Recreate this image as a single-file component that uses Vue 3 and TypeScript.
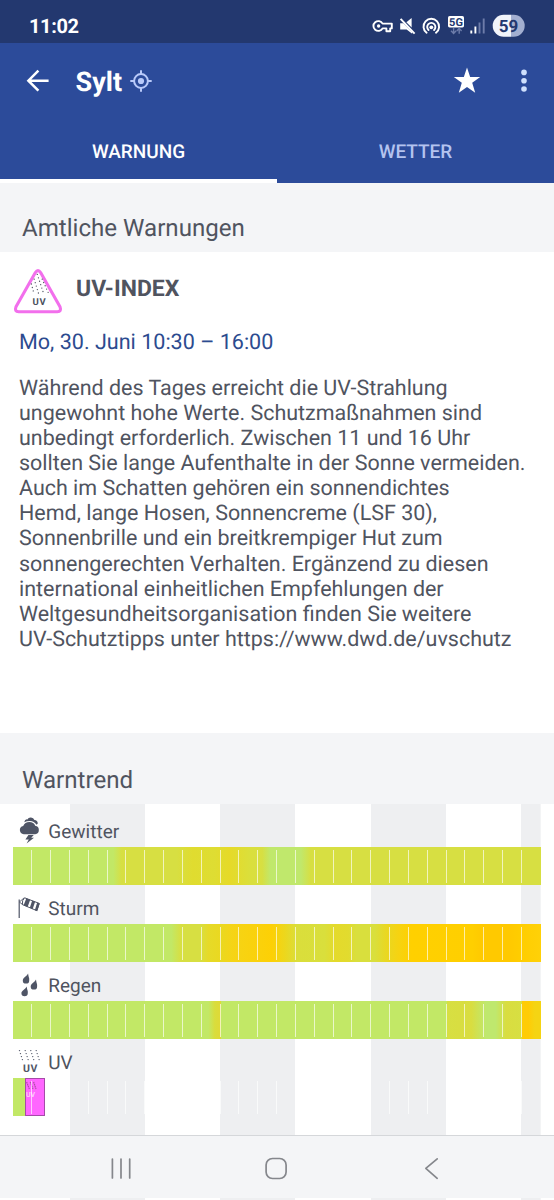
<script setup lang="ts">
interface TrendRow {
  id: string
  label: string
}

const hourCount = 28
const ticks: number[] = Array.from({ length: hourCount - 1 }, (_, i) => i + 1)

const rows: TrendRow[] = [
  { id: 'gewitter', label: 'Gewitter' },
  { id: 'sturm', label: 'Sturm' },
  { id: 'regen', label: 'Regen' },
  { id: 'uv', label: 'UV' },
]

const warningLines: string[] = [
  'Während des Tages erreicht die UV-Strahlung',
  'ungewohnt hohe Werte. Schutzmaßnahmen sind',
  'unbedingt erforderlich. Zwischen 11 und 16 Uhr',
  'sollten Sie lange Aufenthalte in der Sonne vermeiden.',
  'Auch im Schatten gehören ein sonnendichtes',
  'Hemd, lange Hosen, Sonnencreme (LSF 30),',
  'Sonnenbrille und ein breitkrempiger Hut zum',
  'sonnengerechten Verhalten. Ergänzend zu diesen',
  'international einheitlichen Empfehlungen der',
  'Weltgesundheitsorganisation finden Sie weitere',
  'UV-Schutztipps unter https://www.dwd.de/uvschutz',
]
</script>

<template>
  <div class="screen">
    <div class="status">
      <span class="clock">11:02</span>
      <svg class="status-icons" width="160" height="43" viewBox="370 0 160 43">
        <path d="M382.6 23.6H391.8V28.4H390.2V31.2H386.4V28.4H382.6A4.9 4.9 0 1 1 382.6 23.6Z" fill="none" stroke="#fff" stroke-width="1.9" stroke-linejoin="round" />
        <circle cx="378.6" cy="26" r="1.7" fill="#fff" />
        <path d="M400.2 23.2H403.4L412.2 32V33.8L406.6 29.4H400.2Z" fill="#fff" />
        <path d="M406.4 22.2L411.6 18V27.4Z" fill="#fff" />
        <path d="M400.6 18.8L414.6 33.6" stroke="#fff" stroke-width="1.9" />
        <g fill="none" stroke="#fff" stroke-width="1.9" stroke-linecap="round">
          <path d="M426.6 32.8A7.8 7.8 0 1 1 436 32.8" />
          <path d="M428.5 30A4.1 4.1 0 1 1 434.1 30" />
        </g>
        <circle cx="431.3" cy="27.3" r="1.9" fill="#fff" />
        <rect x="448" y="16" width="16" height="11.4" rx="1.6" fill="#fff" />
        <text x="456" y="25.6" text-anchor="middle" class="net">5G</text>
        <path d="M453.6 28V33M451 30.8L453.6 33.4L456.2 30.8M459.2 33.8V28.6M456.8 31L459.2 28.4L461.6 31" fill="none" stroke="#6d7ca9" stroke-width="1.4" />
        <path d="M471.3 30.4V33.6M475.4 26.4V33.6" stroke="#fff" stroke-width="1.9" />
        <path d="M479.5 22.4V33.6M483.7 18.6V33.6" stroke="#6d7ca9" stroke-width="1.9" />
        <path d="M511 14.7H503.7A11 11 0 0 0 503.7 36.7H511Z" fill="#f1f4fa" />
        <path d="M511 14.7H513.7A11 11 0 0 1 513.7 36.7H511Z" fill="#a3afd0" />
        <text x="508.6" y="31.6" text-anchor="middle" class="battery">59</text>
      </svg>
    </div>

    <header class="appbar">
      <div class="toolbar">
        <svg class="back" width="24" height="24" viewBox="0 0 24 24">
          <path d="M12.4 1.7L2.4 11.7L12.4 21.7M2.6 11.7H22.6" fill="none" stroke="#fff" stroke-width="2.5" />
        </svg>
        <h1>Sylt</h1>
        <svg class="locate" width="22" height="22" viewBox="0 0 22 22">
          <circle cx="11" cy="11" r="6.9" fill="none" stroke="#b9cafa" stroke-width="2" />
          <circle cx="11" cy="11" r="3.1" fill="#b9cafa" />
          <path d="M11 .3V4M11 18V21.7M.3 11H4M18 11H21.7" stroke="#b9cafa" stroke-width="2" />
        </svg>
        <svg class="star" width="28" height="28" viewBox="0 0 28 28">
          <path d="M14 .6L17.15 10H27.2L19.2 15.8L22.2 25.8L14 20L5.8 25.8L8.8 15.8L.8 10H10.85Z" fill="#fff" />
        </svg>
        <svg class="more" width="8" height="24" viewBox="0 0 8 24">
          <g fill="#cfe0fd">
            <circle cx="4" cy="3.4" r="2.8" />
            <circle cx="4" cy="11.7" r="2.8" />
            <circle cx="4" cy="20" r="2.8" />
          </g>
        </svg>
      </div>
      <nav class="tabs">
        <div class="tab active">WARNUNG</div>
        <div class="tab">WETTER</div>
      </nav>
    </header>

    <h2 class="section first">Amtliche Warnungen</h2>

    <article class="card">
      <div class="card-head">
        <svg class="triangle" width="50" height="46" viewBox="0 0 50 46">
          <path d="M22.4 4.6Q25 .6 27.6 4.6L47 38.8Q48.8 43.7 44.3 43.8H5.7Q1.2 43.7 3 38.8Z" fill="#fff" stroke="#f26fec" stroke-width="3.1" stroke-linejoin="round" />
          <g stroke="#4b4f5d" stroke-width="1.3" stroke-linecap="round" stroke-dasharray="0 3.6" fill="none">
            <path d="M24.3 6.4L30.6 25.4" />
            <path d="M21.2 11.2L25.4 25" />
            <path d="M18.4 16L20.8 25" />
            <path d="M29.2 11.2L35.6 25.4" />
          </g>
          <text x="26.4" y="36.6" text-anchor="middle" class="tri-uv">UV</text>
        </svg>
        <h3>UV-INDEX</h3>
      </div>
      <p class="date">Mo, 30. Juni 10:30 – 16:00</p>
      <p class="body"><span v-for="line in warningLines" :key="line">{{ line }}</span></p>
    </article>

    <h2 class="section second">Warntrend</h2>

    <section class="chart">
      <div v-for="row in rows" :key="row.id" class="row">
        <div class="label">
          <svg v-if="row.id === 'gewitter'" width="24" height="28" viewBox="0 0 24 28">
            <g fill="#4f5566">
              <path d="M6.2 6.2Q7 2.9 9.4 3.4Q10.4 1.4 13 1.6Q15.6 1.8 16.4 4Q19.6 4.2 19.8 7.6L18.6 8.8Q16.2 5 12 5Q8.6 5 6.2 6.2Z" />
              <path d="M5.8 18.2A4.2 4.2 0 0 1 5.2 9.9Q6.8 6 11.4 6Q15.8 6 17.2 9.7A4.3 4.3 0 0 1 17.2 18.2Z" />
              <path d="M10.4 18.9H15.8L13.2 21.8H16L8.6 27.4L10.8 23.4H7.4Z" />
            </g>
          </svg>
          <svg v-else-if="row.id === 'sturm'" width="24" height="28" viewBox="0 0 24 28">
            <path d="M1.2 6.6V25" stroke="#4f5566" stroke-width="1.2" />
            <path d="M6.6 4.8L21.2 10.4L18.8 17.6L4.4 11.6Q3.8 7 6.6 4.8Z" fill="#fff" stroke="#4f5566" stroke-width="1" />
            <path d="M8.4 5.2L12.2 6.8L9.6 14L5.6 12.2ZM14.2 7.4L17.2 8.6L14.6 16.2L11.8 14.8ZM19.2 9.4L21.8 10.4L19.2 18.2L16.8 17.2Z" fill="#4f5566" />
            <path d="M1.4 9L6.2 4.8M1.4 9L4.6 11.6" stroke="#4f5566" stroke-width=".9" />
          </svg>
          <svg v-else-if="row.id === 'regen'" width="24" height="28" viewBox="0 0 24 28">
            <g fill="#4f5566">
              <path d="M10.1 3.6C10.5 7.4 11.6 8 11.2 10.4A3.2 3.2 0 0 1 4.8 10.4C4.9 7.8 8.6 6.6 10.1 3.6Z" />
              <path d="M18 9.6C18.4 13.4 19.5 14 19.1 16.4A3.2 3.2 0 0 1 12.7 16.4C12.8 13.8 16.5 12.6 18 9.6Z" />
              <path d="M8.7 16.4C9.1 20.2 10.2 20.6 9.8 23A3.2 3.2 0 0 1 3.4 23C3.5 20.4 7.2 19.4 8.7 16.4Z" />
            </g>
          </svg>
          <svg v-else width="24" height="28" viewBox="0 0 24 28">
            <g stroke="#4f5566" stroke-width="1.4" stroke-linecap="round" stroke-dasharray="0 3.15" fill="none">
              <path d="M1.5 3.6L4.6 13.2" />
              <path d="M7.2 3.6L10.3 13.2" />
              <path d="M12.8 3.6L15.9 13.2" />
              <path d="M18.2 3.6L21.3 13.2" />
            </g>
            <text x="12.4" y="25.4" text-anchor="middle" class="row-uv">UV</text>
          </svg>
          <span>{{ row.label }}</span>
        </div>
        <div class="bar" :class="row.id">
          <div v-if="row.id === 'uv'" class="uv-calm"></div>
          <div v-if="row.id === 'uv'" class="uv-alert">
            <svg width="18" height="24" viewBox="0 0 18 24">
              <path d="M.6 3L3.4 10M4.2 3L7 10M7.6 3L10 10" stroke="#b04cab" stroke-width="1.2" stroke-dasharray="1.6 .5" fill="none" />
              <text x="0" y="17.6" class="bar-uv">UV</text>
            </svg>
          </div>
          <div class="ticks">
            <i v-for="t in ticks" :key="t"></i>
          </div>
        </div>
      </div>
    </section>

    <footer class="navbar">
      <svg width="554" height="61" viewBox="0 1136 554 61">
        <g fill="none" stroke="#85878c" stroke-width="1.7" stroke-linecap="round" stroke-linejoin="round">
          <path d="M112.4 1159V1178M121 1159V1178M129.7 1159V1178" />
          <rect x="266.1" y="1158.5" width="20" height="20" rx="6.4" />
          <path d="M437.2 1158.8L425.8 1168.3L437.2 1178.3" />
        </g>
      </svg>
    </footer>
    <div class="strip"></div>
  </div>
</template>

<style>
body {
  margin: 0;
}
</style>

<style scoped>
.screen {
  width: 554px;
  height: 1200px;
  overflow: hidden;
  display: flex;
  flex-direction: column;
  background: #fff;
  color: #50545f;
  font-family: Roboto, "Liberation Sans", sans-serif;
  text-rendering: geometricPrecision;
}

h1,
h2,
h3,
p {
  margin: 0;
  font-weight: 400;
}

svg {
  display: block;
  flex: none;
}

.status {
  flex: none;
  height: 43px;
  display: flex;
  justify-content: space-between;
  background: #23386f;
}

.clock {
  padding: 8px 0 0 29px;
  color: #fff;
  font-size: 20px;
  line-height: 36px;
  font-weight: 700;
  letter-spacing: -0.4px;
}

.status-icons {
  margin-right: 24px;
}

.net {
  font: 700 11px Roboto, sans-serif;
  fill: #23386f;
}

.battery {
  font: 700 17px Roboto, sans-serif;
  fill: #23386f;
}

.appbar {
  flex: none;
  height: 140px;
  background: #2c4b9a;
}

.toolbar {
  height: 76px;
  display: flex;
  align-items: center;
  padding: 0 25.6px 0 25.6px;
}

.back {
  margin-right: 26px;
}

h1 {
  padding-top: 2px;
  color: #fff;
  font-size: 27px;
  font-weight: 700;
  line-height: 36px;
}

.locate {
  margin-left: 8px;
}

.star {
  margin-left: auto;
  margin-right: 39px;
}

.tabs {
  height: 64px;
  display: grid;
  grid-template-columns: 1fr 1fr;
}

.tab {
  box-sizing: border-box;
  height: 64px;
  border-bottom: 4px solid transparent;
  padding-top: 6px;
  color: #b4c3ef;
  font-size: 19px;
  font-weight: 500;
  line-height: 54px;
  text-align: center;
}

.tab.active {
  color: #fff;
  border-bottom-color: #fff;
}

.section {
  flex: none;
  box-sizing: border-box;
  padding-left: 22px;
  background: #f4f5f7;
  font-size: 24.1px;
}

.first {
  height: 69px;
  padding-top: 31px;
  line-height: 28px;
}

.second {
  height: 71px;
  padding-top: 33px;
  line-height: 28px;
}

.card {
  flex: none;
  height: 481px;
  box-sizing: border-box;
  padding-top: 16px;
}

.card-head {
  display: flex;
  height: 46px;
  padding-left: 13px;
}

h3 {
  margin-left: 13px;
  font-size: 23px;
  font-weight: 700;
  line-height: 42px;
}

.tri-uv {
  font: 700 9.5px Roboto, sans-serif;
  fill: #4b4f5d;
  letter-spacing: 0.6px;
}

.date {
  padding: 16px 0 0 19px;
  color: #2c4b8f;
  font-size: 21.55px;
  line-height: 26px;
}

.body {
  padding: 19.6px 0 0 19px;
  font-size: 21.48px;
  line-height: 25.14px;
}

.body span {
  display: block;
  white-space: nowrap;
}

.chart {
  flex: none;
  height: 331px;
  box-sizing: border-box;
  padding: 4px 13.4px 0 13.3px;
  background: repeating-linear-gradient(90deg, transparent 0 56.5px, #eeeff1 56.5px 131.8px, transparent 131.8px 150.66px) 13.3px 0 / 527.7px 100% no-repeat;
}

.row {
  height: 77px;
}

.label {
  height: 39px;
  display: flex;
  align-items: center;
  gap: 6px;
  padding-left: 5px;
}

.label svg {
  margin-top: 5px;
}

.label span {
  padding-top: 9px;
  font-size: 19px;
  line-height: 24px;
}

.row-uv {
  font: 700 10.5px Roboto, sans-serif;
  fill: #4f5566;
  letter-spacing: 0.5px;
}

.bar {
  position: relative;
  height: 38px;
  display: flex;
}

.gewitter {
  background: linear-gradient(90deg, #c2e866 19%, #d7df42 20.6%, #d7df42 31%, #e0dc2f 34%, #dedd33 38%, #e6da28 41%, #dadf3c 45%, #d7df42 47.2%, #c0e86c 48.8%, #c0e86c 54.5%, #d7df42 56.4%, #d7df42 100%);
}

.sturm {
  background: linear-gradient(90deg, #c2e866 30%, #d7df42 31.8%, #d7df42 35.4%, #e6da28 37%, #ead820 39.5%, #f5d416 41.5%, #fbd10a 47%, #fdd005 49%, #ecd71d 51.5%, #dade3b 53.8%, #d9df3c 59%, #e4da2b 61%, #e2db2e 63.5%, #d9df3d 65%, #d9df3d 68.5%, #e8d823 70.5%, #f6d311 73%, #ffd000 75.5%, #ffcf00 87%, #ffc900 89%, #ffc900 94%, #ffcd00 96%, #ffd108 100%);
}

.regen {
  background: linear-gradient(90deg, #c2e866 37%, #d9dd3c 38.2%, #dfd936 39.3%, #c2e866 39.4%, #c2e866 82.1%, #d7df42 82.2%, #d9dd40 86.8%, #bfe86e 89.6%, #bfe86e 91.4%, #d9dd40 93.4%, #d7df42 96.4%, #ffcc05 96.5%, #ffcc05 97.6%, #f5d413 98.8%, #f5d413 100%);
}

.uv-calm {
  width: 12px;
  background: #c2e866;
}

.uv-alert {
  box-sizing: border-box;
  width: 20px;
  border: 1px solid #a54ba8;
  background: #ff66ff;
}

.bar-uv {
  font: 700 7px Roboto, sans-serif;
  fill: #ffc9fa;
}

.ticks {
  position: absolute;
  inset: 2.5px 0 2.5px 18px;
  display: grid;
  grid-template-columns: repeat(27, 18.83px);
}

.ticks i {
  width: 1px;
  background: rgba(255, 255, 255, 0.65);
}

.navbar {
  flex: none;
  height: 63px;
  box-sizing: border-box;
  border-top: 1px solid #d5d7da;
  background: #f4f5f7;
}

.strip {
  flex: none;
  height: 2px;
  background: repeating-linear-gradient(90deg, transparent 0 56.5px, #eeeff1 56.5px 131.8px, transparent 131.8px 150.66px) 13.3px 0 / 527.7px 100% no-repeat;
}
</style>
